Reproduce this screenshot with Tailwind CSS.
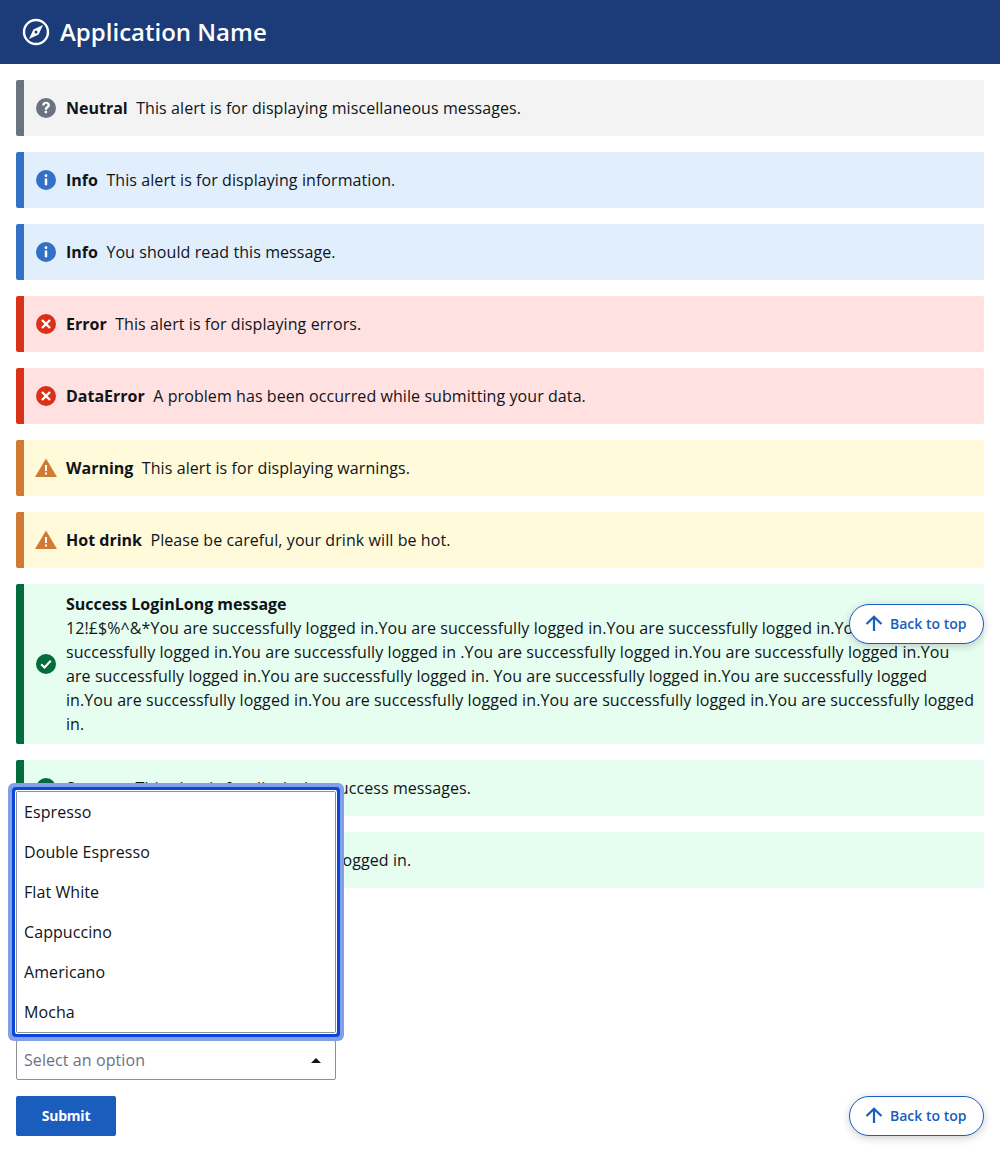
<!DOCTYPE html>
<html lang="en">
<head>
<meta charset="utf-8">
<title>Application Name</title>
<script src="https://cdn.jsdelivr.net/npm/@tailwindcss/browser@4"></script>
</head>
<body class="relative h-[1152px] overflow-hidden bg-white font-['Open_Sans',sans-serif] text-base leading-6 tracking-[0.08px] text-[#0f1419]">
<header class="flex h-16 items-center gap-[10px] bg-[#1b3c78] pl-[22px] tracking-normal text-white">
  <svg class="size-7" viewBox="0 0 28 28" fill="none"><circle cx="14" cy="14" r="12" stroke="white" stroke-width="2.4"/><path d="M21 7 16.600 16.600 7 21 11.400 11.400Z M14 12.500a1.500 1.500 0 1 0 0 3 1.500 1.500 0 0 0 0-3Z" fill="white" fill-rule="evenodd"/></svg>
  <span class="text-2xl font-semibold">Application Name</span>
</header>
<main class="flex flex-col gap-4 px-4 pt-4">
  <div class="flex h-14 items-center rounded-[2px] border-l-8 border-[#6b7280] bg-[#f3f3f3] pl-3 pr-2">
    <svg class="mr-[10px] size-5 shrink-0" viewBox="0 0 20 20"><circle cx="10" cy="10" r="10" fill="#6b7280"/><path d="M6.200 7.400C6.300 5 7.900 3.700 10.100 3.700c2.200 0 3.800 1.400 3.800 3.300 0 1.400-.7 2.200-1.700 2.900-.9.6-1.100 1-1.100 1.800H8.800c0-1.600.4-2.300 1.500-3.100.8-.6 1.200-1 1.200-1.600 0-.8-.6-1.300-1.400-1.300-.9 0-1.500.6-1.600 1.700Z M8.700 12.800h2.400v2.500H8.700Z" fill="white"/></svg>
    <p><strong class="font-bold tracking-normal">Neutral</strong>&nbsp; This alert is for displaying miscellaneous messages.</p>
  </div>
  <div class="flex h-14 items-center rounded-[2px] border-l-8 border-[#3371c7] bg-[#e1effd] pl-3 pr-2">
    <svg class="mr-[10px] size-5 shrink-0" viewBox="0 0 20 20"><circle cx="10" cy="10" r="10" fill="#3371c7"/><path d="M8.800 8.500h2.400v6.800H8.800Z M10 4.300a1.400 1.400 0 1 1 0 2.800 1.400 1.400 0 0 1 0-2.800Z" fill="white"/></svg>
    <p><strong class="font-bold tracking-normal">Info</strong>&nbsp; This alert is for displaying information.</p>
  </div>
  <div class="flex h-14 items-center rounded-[2px] border-l-8 border-[#3371c7] bg-[#e1effd] pl-3 pr-2">
    <svg class="mr-[10px] size-5 shrink-0" viewBox="0 0 20 20"><circle cx="10" cy="10" r="10" fill="#3371c7"/><path d="M8.800 8.500h2.400v6.800H8.800Z M10 4.300a1.400 1.400 0 1 1 0 2.800 1.400 1.400 0 0 1 0-2.800Z" fill="white"/></svg>
    <p><strong class="font-bold tracking-normal">Info</strong>&nbsp; You should read this message.</p>
  </div>
  <div class="flex h-14 items-center rounded-[2px] border-l-8 border-[#da3119] bg-[#ffe1e1] pl-3 pr-2">
    <svg class="mr-[10px] size-5 shrink-0" viewBox="0 0 20 20"><circle cx="10" cy="10" r="10" fill="#da3119"/><path d="M6 6l8 8M14 6l-8 8" stroke="white" stroke-width="2.400"/></svg>
    <p><strong class="font-bold tracking-normal">Error</strong>&nbsp; This alert is for displaying errors.</p>
  </div>
  <div class="flex h-14 items-center rounded-[2px] border-l-8 border-[#da3119] bg-[#ffe1e1] pl-3 pr-2">
    <svg class="mr-[10px] size-5 shrink-0" viewBox="0 0 20 20"><circle cx="10" cy="10" r="10" fill="#da3119"/><path d="M6 6l8 8M14 6l-8 8" stroke="white" stroke-width="2.400"/></svg>
    <p><strong class="font-bold tracking-normal">DataError</strong>&nbsp; A problem has been occurred while submitting your data.</p>
  </div>
  <div class="flex h-14 items-center rounded-[2px] border-l-8 border-[#d07a33] bg-[#fffad9] pl-[11px] pr-2">
    <svg class="mr-[9px] h-5 w-[22px] shrink-0" viewBox="0 0 22 20"><path d="M11 0.500 22 19H0Z" fill="#d07a33"/><path d="M10 7h2v6h-2Z M10 14.500h2v2h-2Z" fill="white"/></svg>
    <p><strong class="font-bold tracking-normal">Warning</strong>&nbsp; This alert is for displaying warnings.</p>
  </div>
  <div class="flex h-14 items-center rounded-[2px] border-l-8 border-[#d07a33] bg-[#fffad9] pl-[11px] pr-2">
    <svg class="mr-[9px] h-5 w-[22px] shrink-0" viewBox="0 0 22 20"><path d="M11 0.500 22 19H0Z" fill="#d07a33"/><path d="M10 7h2v6h-2Z M10 14.500h2v2h-2Z" fill="white"/></svg>
    <p><strong class="font-bold tracking-normal">Hot drink</strong>&nbsp; Please be careful, your drink will be hot.</p>
  </div>
  <div class="flex h-40 items-center rounded-[2px] border-l-8 border-[#036b3c] bg-[#e6fef0] pl-3 pr-2">
    <svg class="mr-[10px] size-5 shrink-0" viewBox="0 0 20 20"><circle cx="10" cy="10" r="10" fill="#036b3c"/><path d="M5.200 10.300 8.500 13.500 14.800 6.800" stroke="white" stroke-width="2.200" fill="none"/></svg>
    <div><strong class="block font-bold tracking-normal">Success LoginLong message</strong><p>12!£$%^&amp;*You are successfully logged in.You are successfully logged in.You are successfully logged in.You are successfully logged in.You are successfully logged in .You are successfully logged in.You are successfully logged in.You are successfully logged in.You are successfully logged in. You are successfully logged in.You are successfully logged in.You are successfully logged in.You are successfully logged in.You are successfully logged in.You are successfully logged in.</p></div>
  </div>
  <div class="flex h-14 items-center rounded-[2px] border-l-8 border-[#036b3c] bg-[#e6fef0] pl-3 pr-2">
    <svg class="mr-[10px] size-5 shrink-0" viewBox="0 0 20 20"><circle cx="10" cy="10" r="10" fill="#036b3c"/><path d="M5.200 10.300 8.500 13.500 14.800 6.800" stroke="white" stroke-width="2.200" fill="none"/></svg>
    <p><strong class="font-bold tracking-normal">Success</strong>&nbsp; This alert is for displaying success messages.</p>
  </div>
  <div class="flex h-14 items-center rounded-[2px] border-l-8 border-[#036b3c] bg-[#e6fef0] pl-3 pr-2">
    <svg class="mr-[10px] size-5 shrink-0" viewBox="0 0 20 20"><circle cx="10" cy="10" r="10" fill="#036b3c"/><path d="M5.200 10.300 8.500 13.500 14.800 6.800" stroke="white" stroke-width="2.200" fill="none"/></svg>
    <p><strong class="font-bold tracking-normal">Success Login</strong>&nbsp; You are successfully logged in.</p>
  </div>
  <div class="mt-[136px] flex h-10 w-80 items-center justify-between rounded-[2px] border border-[#8a8f98] pl-[7px] pr-[14px] text-[#6b7280]">
    <span>Select an option</span>
    <svg class="h-[5px] w-[10px]" viewBox="0 0 10 5"><path d="M5 0 10 5H0Z" fill="#0f1419"/></svg>
  </div>
  <div class="flex items-start justify-between">
    <button class="h-10 w-[100px] rounded-[2px] bg-[#1a5dbd] text-sm font-bold tracking-[-0.2px] text-white">Submit</button>
    <a href="#" class="flex h-10 w-[135px] items-center gap-[7px] rounded-full border border-[#1a5dbd] bg-white pl-[15px] text-sm font-semibold tracking-normal text-[#1a5dbd] shadow-[0_2px_8px_rgba(0,0,0,0.2)]">
      <svg class="size-[18px] shrink-0" viewBox="0 0 18 18" fill="none"><path d="M9 16V2M1.500 9 9 1.800 16.500 9" stroke="#1a5dbd" stroke-width="2.200"/></svg>
      Back to top
    </a>
  </div>
</main>
<a href="#" class="absolute left-[849px] top-[604px] flex h-10 w-[135px] items-center gap-[7px] rounded-full border border-[#1a5dbd] bg-white pl-[15px] text-sm font-semibold tracking-normal text-[#1a5dbd] shadow-[0_2px_8px_rgba(0,0,0,0.2)]">
  <svg class="size-[18px] shrink-0" viewBox="0 0 18 18" fill="none"><path d="M9 16V2M1.500 9 9 1.800 16.500 9" stroke="#1a5dbd" stroke-width="2.200"/></svg>
  Back to top
</a>
<div class="absolute left-2 top-[783px] w-[336px] rounded-[6px] bg-[#82a0ea] p-1">
  <div class="rounded-[4px] bg-[#0b46d8] p-[3px]">
    <div class="rounded-[2px] bg-white p-px">
      <ul class="rounded-[2px] border border-[#8a8f98] bg-white">
        <li class="flex h-10 items-center pl-[7px]">Espresso</li>
        <li class="flex h-10 items-center pl-[7px]">Double Espresso</li>
        <li class="flex h-10 items-center pl-[7px]">Flat White</li>
        <li class="flex h-10 items-center pl-[7px]">Cappuccino</li>
        <li class="flex h-10 items-center pl-[7px]">Americano</li>
        <li class="flex h-10 items-center pl-[7px]">Mocha</li>
      </ul>
    </div>
  </div>
</div>
</body>
</html>
